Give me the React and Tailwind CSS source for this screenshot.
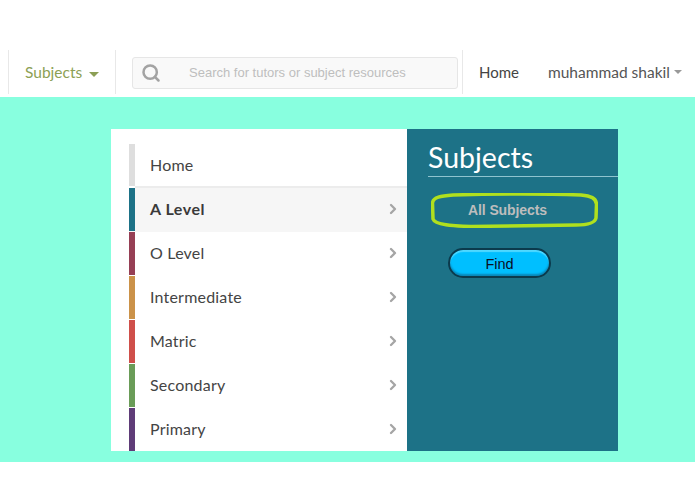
import React from 'react';
import { ChevronRight, Search } from 'lucide-react';

const levels = [
    { name: 'A Level', color: 'bg-[#1d7287]', active: true },
    { name: 'O Level', color: 'bg-[#963f55]' },
    { name: 'Intermediate', color: 'bg-[#cb9249]' },
    { name: 'Matric', color: 'bg-[#cf4f4a]' },
    { name: 'Secondary', color: 'bg-[#6a9c58]' },
    { name: 'Primary', color: 'bg-[#5f3c78]' },
];

const App = () => {
    return (
        <div className="w-[695px] h-[494px] bg-white overflow-hidden font-['Lato',sans-serif]">
            <header className="h-[97px] pt-[50px] flex items-start">
                <div className="ml-2 w-[108px] h-11 border-x border-[#e8e8e8] flex items-center pl-4 pt-[2px] gap-[7px] text-[15.5px] text-[#8c9f55]">
                    Subjects
                    <span className="mt-[3px] border-x-[5px] border-t-[5px] border-x-transparent border-t-[#8c9f55]"></span>
                </div>
                <div className="ml-4 mt-[7px] w-[326px] h-[32px] rounded-[3px] border border-[#e6e6e6] bg-[#f9f9f9] flex items-center pl-2">
                    <Search size={20} strokeWidth={3} className="text-[#a3a3a3]" />
                    <span className="ml-[28px] font-['Liberation_Sans',sans-serif] text-[13px] text-[#bebebe]">Search for tutors or subject resources</span>
                </div>
                <div className="ml-1 h-11 w-px bg-[#e8e8e8]"></div>
                <span className="ml-4 mt-3 text-[15px] leading-[20px] text-[#444444]">Home</span>
                <span className="ml-[29px] mt-3 text-[15.5px] leading-[20px] text-[#555555]">muhammad shakil</span>
                <span className="ml-1 mt-[20px] border-x-[4px] border-t-[4px] border-x-transparent border-t-[#999999]"></span>
            </header>

            <main className="h-[365px] bg-[#88ffdf] pt-8 pl-[111px]">
                <div className="w-[507px] h-[322px] flex overflow-hidden">
                    <nav className="w-[296px] bg-white pt-[15px] pl-[18px] flex flex-col">
                        <a className="h-[44px] shrink-0 flex items-stretch">
                            <span className="w-[6px] mb-[2px] bg-[#dedede]"></span>
                            <span className="flex-1 flex items-center pl-[15px] border-b-2 border-[#ececec] text-[16px] tracking-[0.2px] text-[#444444]">Home</span>
                        </a>
                        {levels.map((level) => (
                            <a key={level.name} className={`h-[44px] shrink-0 flex items-stretch ${level.active ? 'bg-[#f6f6f6]' : ''}`}>
                                <span className={`w-[6px] mb-[1px] ${level.color}`}></span>
                                <span className={`ml-[15px] pb-[2px] self-center text-[16px] ${level.active ? 'font-bold tracking-[0.5px] text-[#3a3a3a]' : 'tracking-[0.2px] text-[#444444]'}`}>{level.name}</span>
                                <ChevronRight size={16} strokeWidth={3.5} className="ml-auto mr-[6px] mb-[2px] self-center text-[#a5a5a5]" />
                            </a>
                        ))}
                    </nav>
                    <section className="w-[211px] bg-[#1d7287] pt-[10px]">
                        <h2 className="ml-[21px] text-[28.5px] leading-[37px] text-white">Subjects</h2>
                        <div className="ml-[21px] h-px bg-[#8fc3cf]"></div>
                        <div className="relative ml-6 mt-4 w-[167px] h-[35px] flex items-center pl-[37px] font-['Liberation_Sans',sans-serif] font-bold text-[14px] tracking-[-0.1px] text-[#bdbdbd]">
                            All Subjects
                            <svg className="absolute left-0 top-0" width="167" height="35" viewBox="0 0 167 35" fill="none">
                                <path d="M1.5 10C2 4 10 3 22 2C60 1 120 1 150 2C160 3 165 5 165.5 11L165 25C164 30 155 32 145 32L40 33.5C22 33 4 32 2 26Z" stroke="#b0e01e" strokeWidth="3.5" />
                            </svg>
                        </div>
                        <button className="block ml-[41px] mt-5 w-[103px] h-[30px] pt-[3px] rounded-full border-2 border-[#0b3a4c] bg-[#00bfff] shadow-[inset_0_-2px_2px_#0a86b8,inset_0_2px_1px_#4fd8ff] font-['Liberation_Sans',sans-serif] text-[14.5px] text-[#0a0f1f]">
                            Find
                        </button>
                    </section>
                </div>
            </main>
        </div>
    );
};

export default App;
